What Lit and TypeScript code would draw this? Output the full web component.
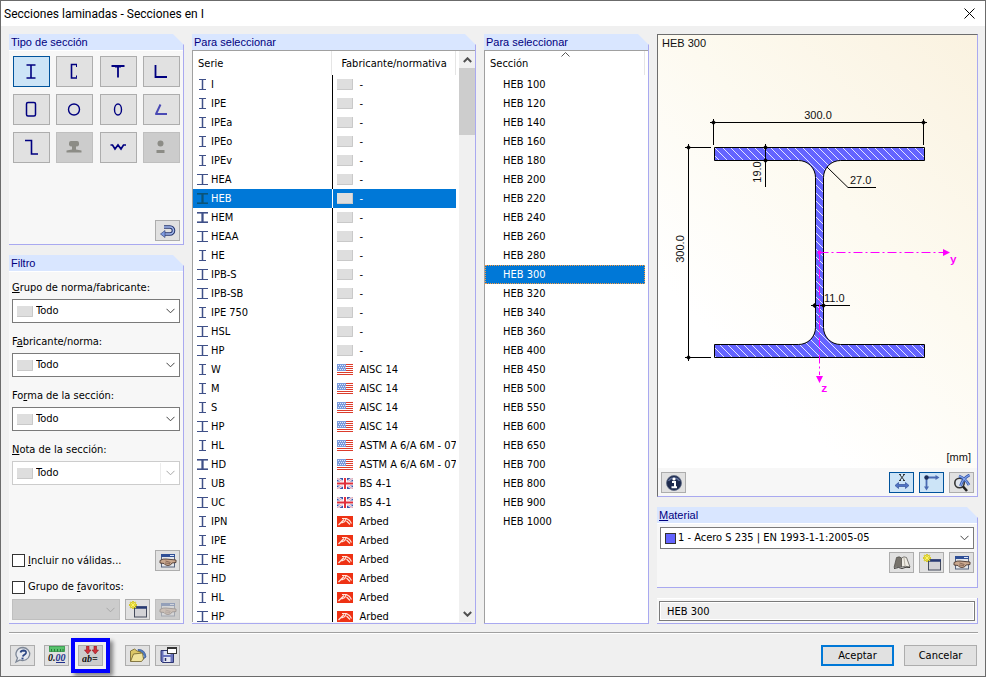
import { LitElement, html, css, svg, nothing, type TemplateResult } from "lit";
import { customElement, state } from "lit/decorators.js";
import { classMap } from "lit/directives/class-map.js";

type Flag = "none" | "us" | "uk" | "arbed";
type Beam = "slim" | "wide" | "heavy";
type Series = [name: string, beam: Beam, flag: Flag, maker: string];

const SERIES: Series[] = [
  ["I", "slim", "none", "-"],
  ["IPE", "slim", "none", "-"],
  ["IPEa", "slim", "none", "-"],
  ["IPEo", "slim", "none", "-"],
  ["IPEv", "slim", "none", "-"],
  ["HEA", "wide", "none", "-"],
  ["HEB", "heavy", "none", "-"],
  ["HEM", "heavy", "none", "-"],
  ["HEAA", "wide", "none", "-"],
  ["HE", "slim", "none", "-"],
  ["IPB-S", "wide", "none", "-"],
  ["IPB-SB", "wide", "none", "-"],
  ["IPE 750", "slim", "none", "-"],
  ["HSL", "wide", "none", "-"],
  ["HP", "wide", "none", "-"],
  ["W", "slim", "us", "AISC 14"],
  ["M", "slim", "us", "AISC 14"],
  ["S", "slim", "us", "AISC 14"],
  ["HP", "wide", "us", "AISC 14"],
  ["HL", "slim", "us", "ASTM A 6/A 6M - 07"],
  ["HD", "heavy", "us", "ASTM A 6/A 6M - 07"],
  ["UB", "slim", "uk", "BS 4-1"],
  ["UC", "wide", "uk", "BS 4-1"],
  ["IPN", "slim", "arbed", "Arbed"],
  ["IPE", "slim", "arbed", "Arbed"],
  ["HE", "wide", "arbed", "Arbed"],
  ["HD", "wide", "arbed", "Arbed"],
  ["HL", "slim", "arbed", "Arbed"],
  ["HP", "wide", "arbed", "Arbed"],
];

const SECTIONS = [
  100, 120, 140, 160, 180, 200, 220, 240, 260, 280, 300, 320, 340, 360, 400, 450,
  500, 550, 600, 650, 700, 800, 900, 1000,
].map((n) => `HEB ${n}`);

/* Section type glyphs on a 21 x 21 grid. */
const TYPES: { label: string; off?: boolean; art: TemplateResult }[] = [
  { label: "Perfil I", art: svg`<path d="M5.500 4h9M5.500 17h9M10 4v13" stroke-width="1.600"/>` },
  { label: "Perfil U", art: svg`<path d="M13 3.500H7.500v13.500H13" stroke-width="1.600"/><path d="M12.500 4v2M12.500 14.500v2"/>` },
  { label: "Perfil T", art: svg`<path d="M3.500 5h13M10 4.500v12" stroke-width="1.800"/><path d="M7 6h6"/>` },
  { label: "Angular", art: svg`<path d="M4.500 4v12h11.500" stroke-width="1.800"/>` },
  { label: "Tubo rectangular", art: svg`<rect x="5.500" y="3.500" width="9" height="13.500" rx="1.500" stroke-width="1.500"/>` },
  { label: "Tubo circular", art: svg`<circle cx="10" cy="10.500" r="5.500" stroke-width="1.400"/>` },
  { label: "Tubo elíptico", art: svg`<ellipse cx="10" cy="10.500" rx="3.500" ry="5.500" stroke-width="1.400"/>` },
  { label: "Angular abierto", art: svg`<path d="M9.500 5.500L5 15h11" stroke-width="2" stroke-linejoin="round" stroke="#4a4ab4"/>` },
  { label: "Perfil Z", art: svg`<path d="M4 3.500h6.500v13.500h6.500" stroke-width="1.600"/>` },
  {
    label: "Carril",
    off: true,
    art: svg`<path d="M5 8V6q0-2 2-2h6q2 0 2 2v2q-.500 1.500-3 1.500v3l5.500 1v2h-15v-2l5.500-1v-3q-2.500 0-3-1.500z" fill="#8c8c86" stroke="none"/>`,
  },
  { label: "Chapa corrugada", art: svg`<path d="M2.500 8h2l2.500 4 3-4 3 4 2.500-4h2.500" stroke-width="1.700"/>` },
  {
    label: "Macizo",
    off: true,
    art: svg`<circle cx="9.500" cy="6.500" r="3" fill="#8c8c86" stroke="none"/><path d="M5.500 14.500h8" stroke="#8c8c86" stroke-width="3"/>`,
  },
];

const swatch = svg`<rect width="16" height="11" fill="#dedede"/><path d="M0 10.500H15.500V0" fill="none" stroke="#c9c9c9"/>`;

const FLAGS: Record<Flag, TemplateResult> = {
  none: swatch,
  us: svg`<rect width="16" height="11" fill="#fff"/>
    <path d="M0 .5h16M0 2.500h16M0 4.500h16M0 6.500h16M0 8.500h16M0 10.500h16" stroke="#dc3c2c"/>
    <rect width="9" height="7" fill="#7b9bdc"/>
    <path d="M1 1.500h7M2 3.500h7M1 5.500h7" stroke="#dfe8fa" stroke-dasharray="1 1"/>`,
  uk: svg`<rect width="16" height="11" fill="#3c52a8"/>
    <path d="M0 0l16 11M16 0L0 11" stroke="#e8ecf8" stroke-width="2.600"/>
    <path d="M0 0l16 11M16 0L0 11" stroke="#e88c94" stroke-width=".8"/>
    <path d="M8 0v11M0 5.500h16" stroke="#fff" stroke-width="4"/>
    <path d="M8 0v11M0 5.500h16" stroke="#e0303c" stroke-width="2"/>`,
  arbed: svg`<rect width="16" height="11" fill="#ee3214"/>
    <path d="M1.500 9L7 3.500M5 2.500h4.500l3 2 2 3M9 3L7.500 6M9.500 5l3.500 3.500M4.500 7L8 5.500" fill="none" stroke="#ffe6dc" stroke-width="1.200"/>`,
};

const flag = (kind: Flag) => html`<svg class="flag" viewBox="0 0 16 11" aria-hidden="true">${FLAGS[kind]}</svg>`;

const beam = (kind: Beam) => {
  const x = kind === "slim" ? 2 : 0;
  const w = kind === "slim" ? 7 : 11;
  return html`<svg class="beam" viewBox="0 0 11 11" aria-hidden="true">
    <path d="M${x} .5h${w}M${x} 10.500h${w}" stroke-width="1"/>
    ${kind === "heavy" ? svg`<path d="M0 1.500h11M0 9.500h11" opacity=".6"/>` : nothing}
    <path d="M5.500 1v9" stroke-width=${kind === "heavy" ? 2 : 1}/>
    <path class="soft" d="M4.500 1v9M6.500 1v9"/>
  </svg>`;
};

const chevron = html`<svg class="chevron" viewBox="0 0 9 6" aria-hidden="true"><path d="M.5 .8L4.500 4.800L8.500 .8"/></svg>`;

/* Toolbar glyphs on an 18 x 18 grid. */
const undo = svg`<path d="M5 5h6a3 3 0 0 1 0 7H5" stroke="#27366f" stroke-width="3.600"/>
  <path d="M5 5h6a3 3 0 0 1 0 7H5" stroke="#a5bbee" stroke-width="1.500"/>
  <path d="M6 8.500v7L1.500 12z" fill="#7f9be0" stroke="#27366f" stroke-width=".6"/>`;
const windowEdit = (off = false) => svg`<g opacity=${off ? 0.35 : 1}>
  <rect x="2.500" y="3" width="13" height="12" fill="#e4e6ea" stroke="#56637d"/>
  <path d="M2 3.500h14" stroke="#2f4f96" stroke-width="3"/><path d="M11 3.500h4" stroke="#d8e2f6"/>
  <path d="M1 8.500q3-2 6-1.500l5 .5 5 .5v2.500l-4 .5q-1 2.500-4 2.500-3 0-4-2l-4-.5z" fill="#caa88e" stroke="#4d3a32" stroke-width=".9"/>
  <path d="M6 11l5 .5M6.500 9l5 1.500" stroke="#6b4e40" stroke-width=".7"/></g>`;
const windowNew = svg`<rect x="5.500" y="6" width="12" height="10" fill="#d3d3d6" stroke="#454b5c"/>
  <path d="M5 6.500h13" stroke="#273a73" stroke-width="2.500"/>
  <path d="M4 0v8M0 4h8M1.200 1.200l5.600 5.600M6.800 1.200L1.200 6.800" stroke="#c9ba10" stroke-width="1.800"/>
  <path d="M4 .5v7M.5 4h7M1.500 1.500l5 5M6.500 1.500l-5 5" stroke="#fff66a" stroke-width=".9"/>`;
const book = svg`<path d="M1 13.500L3.500 3.500Q6.500 2 8.500 4V13Q5 11.500 1 13.500z" fill="#77736c" stroke="#4b4945" stroke-width=".7"/>
  <path d="M8.500 4Q11 2 13.500 3.500L17 13q-5-1.500-8.500 0z" fill="#efece4" stroke="#4b4945" stroke-width=".7"/>
  <path d="M11 4l1 8" stroke="#b9b4a8"/>
  <path d="M1 14.500q5-2 8 0 4-2 8-1" stroke="#3a3835"/>`;
const help = svg`<path d="M9 1.500a7 6.500 0 1 1-3 12.500L2 16l1.500-4A7 6.500 0 0 1 9 1.500z" fill="#e6e9ef" stroke="#7d8797" stroke-width="1.300"/>
  <path d="M6.500 6.500Q7 4.500 9.500 4.500q3 .2 2.500 2.500-.3 1-2 2-1 .7-1.200 1.500" stroke="#2b4684" stroke-width="1.800"/>
  <path d="M7.500 12.500h2" stroke="#2b4684" stroke-width="1.800"/>`;
const folder = svg`<path d="M9 3.500q7-.5 8 7.500l-4 3z" fill="#4f7cc0" stroke="#314f8c" stroke-width=".7"/>
  <path d="M9 6q4-.5 6 5" stroke="#cfe0f6" stroke-width="1"/>
  <path d="M1.500 15V5l4-2L8 5l4 1v8z" fill="#dcc766" stroke="#6d5f28" stroke-width=".8"/>
  <path d="M1.500 15.500L4.500 8l9-1 1 6-2 2.500z" fill="#f1e49c" stroke="#6d5f28" stroke-width=".8"/>`;
const disk = svg`<path d="M2 4.500h12.500v12H3.500L2 15z" fill="#6a74bc" stroke="#2e3674"/>
  <rect x="4.500" y="11" width="7" height="5" fill="#e7e9f3"/><path d="M6.500 12v3" stroke="#252c66" stroke-width="1.500"/>
  <rect x="4.500" y="5" width="7" height="4" fill="#dbe1f4"/>
  <rect x="8.500" y="1.500" width="9" height="6" fill="#fff" stroke="#333"/><path d="M8 2h10" stroke="#333" stroke-width="2"/>`;
const info = svg`<circle cx="9" cy="9" r="7.500" fill="#1d2a4d" stroke="#5f6b84" stroke-width=".8"/>
  <path d="M3.500 7a6 5 0 0 1 11 0" stroke="#5b6b96" stroke-width="1.500"/>
  <circle cx="9" cy="5" r="1.600" fill="#fff"/><path d="M7 8h3v5M6.500 13.200h5.500" stroke="#fff" stroke-width="2"/>`;
const dims = svg`<path d="M7 1l4 5M11 1L7 6M6 .5h2M10 .5h2M6 6.500h2M10 6.500h2" stroke="#222" stroke-width=".9"/>
  <path d="M2 11.500l3.500-3v2h7v-2l3.500 3-3.500 3v-2h-7v2z" fill="#5074c4" stroke="#33529c" stroke-width=".7"/>`;
const axes = svg`<path d="M3 3.500h10M3.500 3v10" stroke="#4a6ab2" stroke-width="1.800"/>
  <path d="M12.500 1l4 2.500-4 2.500zM1 12.500l2.500 4 2.500-4z" fill="#4a6ab2"/><circle cx="3.500" cy="3.500" r="2.200" fill="#1d2d58"/>`;
const lens = svg`<circle cx="6.500" cy="9" r="4.700" stroke="#333" stroke-width="1.600" fill="#dfe4ec"/>
  <path d="M10 12.500l4 4.500" stroke="#222" stroke-width="2.600"/>
  <path d="M6 2q6 2 10 9M16.500 1Q10 4 7.500 12" stroke="#3558b0" stroke-width="2.800"/>
  <path d="M6 2q6 2 10 9M16.500 1Q10 4 7.500 12" stroke="#86a6ea" stroke-width="1.200"/>`;
const units = svg`<rect x="1.500" y=".5" width="15" height="5" fill="#58c26c" stroke="#2f9645" stroke-width=".8"/>
  <path d="M3.500 3v2.500M6.500 3v2.500M9.500 3v2.500M12.500 3v2.500M15 3v2.500" stroke="#1d6a2f" stroke-width=".8"/>
  <text class="num" x="0" y="15">0.<tspan fill="#20308c">00</tspan></text><path d="M8 16.500h9" stroke="#20308c"/>`;
const params = svg`<path d="M4.500 0h2.500v4H9L5.750 8 2.500 4h2zM12 0h2.500v4h2l-3.250 4L10 4h2z" fill="#d0303a" stroke="#8d1820" stroke-width=".6"/>
  <text class="num" x="0" y="16">ab=</text>`;

@customElement("app-root")
export class AppRoot extends LitElement {
  @state() private series = 6;
  @state() private section = 10;

  static styles = css`
    :host {
      --ui: "DejaVu Sans Condensed", "Noto Sans", sans-serif;
      --caption: "Liberation Sans", Arial, sans-serif;
      --rim: #a9a9f0;
      --edge: #adadad;
      display: flex;
      flex-direction: column;
      box-sizing: border-box;
      height: 100vh;
      border: 1px solid #6b6b6b;
      background: #f0f0f0;
      color: #000;
      font: 11px/14px var(--ui);
    }
    *, *::before, *::after { box-sizing: border-box; }
    svg { display: block; fill: none; }
    button, select, input { font: inherit; color: inherit; margin: 0; }
    .title {
      display: flex;
      align-items: center;
      justify-content: space-between;
      height: 25px;
      padding: 0 8px 0 3px;
      background: #fff;
      font: 12px/16px Roboto, "Open Sans", sans-serif;
    }
    .title h1 { margin: 0; font: inherit; }
    .close { border: 0; padding: 2px; background: none; }
    .close svg { width: 11px; height: 11px; stroke: #000; }
    main {
      flex: 1;
      min-height: 0;
      display: grid;
      grid-template-columns: 175fr 284fr 165fr 321fr;
      grid-template-rows: minmax(0, 1fr);
      gap: 8px;
      padding: 8px 7px 8px 8px;
    }
    .column { display: flex; flex-direction: column; gap: 10px; min-width: 0; min-height: 0; }
    .panel { display: flex; flex-direction: column; min-height: 0; }
    .grow { flex: 1; }
    .panel h2 {
      flex: none;
      height: 16px;
      margin: 0;
      padding: 0 2px;
      border-right: 1px solid var(--rim);
      background: #d9e6ff;
      color: #000080;
      font: 11px/16px var(--caption);
      clip-path: polygon(0 0, calc(100% - 11px) 0, 100% 11px, 100% 100%, 0 100%);
    }
    .body {
      flex: 1;
      min-height: 0;
      display: flex;
      flex-direction: column;
      border: solid var(--rim);
      border-width: 0 1px 1px 0;
      background: #f7f7f7;
      box-shadow: inset 0 1px #fff;
    }
    .tool {
      display: grid;
      place-items: center;
      flex: none;
      width: 25px;
      height: 21px;
      padding: 0;
      border: 1px solid var(--edge);
      background: #e1e1e1;
    }
    .tool svg { width: 18px; height: 18px; }
    .tool[disabled] { border-color: #bfbfbf; background: #ccc; }
    .tool.on, .type.on { border-color: #00539c; background: #cce4f7; }
    .num { font: italic bold 10px "Liberation Serif", serif; fill: #111; }

    .types {
      display: grid;
      grid-template-columns: repeat(4, 37px);
      justify-content: space-between;
      gap: 7px 0;
      padding: 6px 3px 57px 4px;
    }
    .type {
      display: grid;
      place-items: center;
      height: 31px;
      padding: 0;
      border: 1px solid var(--edge);
      background: #e1e1e1;
    }
    .type svg { width: 21px; height: 21px; stroke: #000080; }
    .type[disabled] { border-color: #bfbfbf; background: #ccc; }
    .undo { align-self: flex-end; margin: 0 3px 3px; }

    .filters { display: grid; gap: 12px; padding: 10px 3px 0; }
    .field { display: grid; gap: 4px; }
    .combo {
      display: flex;
      align-items: center;
      height: 24px;
      padding: 0 4px;
      border: 1px solid #7a7a7a;
      background: #fff;
    }
    .combo .flag { margin-right: 3px; }
    .combo select {
      flex: 1;
      min-width: 0;
      padding: 0;
      border: 0;
      background: none;
      appearance: none;
      opacity: 1;
    }
    .combo.off { border-color: #ccc; }
    .field .off select { height: 20px; border-right: 1px solid #ececec; margin-right: 5px; }
    .chevron { width: 9px; height: 6px; stroke: #444; flex: none; }
    .off .chevron { stroke: #a8a8a8; }
    .flag { width: 16px; height: 11px; flex: none; }
    .options { display: grid; gap: 9px; margin-top: auto; padding: 0 3px 3px; }
    .favorites { display: grid; gap: 5px; }
    .row { display: flex; align-items: center; justify-content: space-between; gap: 5px; }
    .check { display: flex; align-items: center; gap: 3px; }
    .check input {
      appearance: none;
      width: 13px;
      height: 13px;
      border: 1px solid #333;
      background: #fff;
    }
    .combo.blank { flex: 1; height: 21px; border-color: #bfbfbf; background: #ccc; }

    .list {
      flex: 1;
      min-height: 0;
      display: flex;
      overflow: hidden;
      border: solid #a0a0a0;
      border-width: 1px 0 0 1px;
      background: #fff;
      margin-bottom: 1px;
    }
    .list.lined { margin-bottom: 0; }
    .view { flex: 1; min-width: 0; overflow: hidden; position: relative; }
    table { border-collapse: separate; border-spacing: 0; table-layout: fixed; width: 100%; }
    th, td { padding: 0 0 0 4px; font-weight: normal; text-align: left; white-space: nowrap; }
    th { height: 24px; padding: 1px 0 0 5px; border-right: 1px solid #e5e5e5; }
    th:first-child { width: 53%; }
    .makers th + th { padding-left: 9px; }
    td { height: 19px; }
    td + td { border-left: 1px solid #000; }
    .cell { display: flex; align-items: center; gap: 3px; height: 19px; }
    .cell span { padding-top: 1px; line-height: 16px; }
    .cell.maker { gap: 6px; }
    .beam { width: 11px; height: 11px; stroke: #3f5088; flex: none; }
    .beam .soft { opacity: .25; }
    tr.picked { background: #0078d7; color: #fff; }
    tr.picked td + td { border-color: #fff; }
    .picked .beam { stroke: #0a5478; }
    .sections th:first-child { width: 100%; }
    .sections td { padding-left: 18px; }
    .sections .picked td { outline: 1px dotted #ff9a3c; outline-offset: -1px; }
    .sections { padding-right: 3px; }
    .makers { margin-right: 3px; }
    .sort { position: absolute; top: 1px; left: 50%; width: 9px; height: 5px; margin-left: -6px; stroke: #555; }
    .scroll {
      display: flex;
      flex-direction: column;
      width: 16px;
      background: #f0f0f0;
    }
    .scroll button { display: grid; place-items: center; height: 17px; padding: 0; border: 0; background: none; }
    .scroll svg { width: 9px; height: 6px; stroke: #505050; stroke-width: 2; }
    .thumb { height: 67px; background: #cdcdcd; }
    .track { flex: 1; }

    .preview { flex: none; border: 1px solid; border-color: #6d6d6d var(--rim) var(--rim) #6d6d6d; background: #f7f7f7; }
    .canvas { display: block; width: 100%; height: auto; background: linear-gradient(45deg, #fff 25%, #fdfaf0 60%, #faf2e0); }
    .canvas text { font: 11px var(--caption); fill: #111; }
    .canvas .axis { font: bold 11px "Liberation Mono", monospace; fill: #f0f; }
    .bar { display: flex; gap: 5px; padding: 4px 3px 3px; }
    .bar .first { margin-right: auto; }
    .material { padding: 4px 3px 14px; gap: 3px; }
    .material .bar { justify-content: flex-end; padding: 0; }
    .chip { width: 11px; height: 11px; margin-right: 2px; border: 1px solid #333; background: #6464ff; }
    .combo.pick { height: 22px; }
    .result { flex: none; }
    .result .body { padding: 3px 2px 2px; }
    .result input {
      width: 100%;
      height: 20px;
      padding: 0 7px;
      border: 1px solid #7a7a7a;
      outline: 1px solid #fff;
      outline-offset: -2px;
      background: #f0f0f0;
    }

    footer {
      display: flex;
      align-items: center;
      gap: 22px;
      height: 44px;
      margin: 0 7px 0 8px;
      padding: 1px 1px 0;
      border-top: 1px solid #a0a0a0;
      box-shadow: inset 0 1px #fff;
    }
    .group { display: flex; gap: 9px; }
    .group.tight { gap: 5px; }
    .lit { position: relative; }
    .lit::after {
      content: "";
      position: absolute;
      inset: -7px;
      border: 4px solid #00f;
      box-shadow: 3px 3px 4px rgba(0, 0, 0, .45);
      pointer-events: none;
    }
    .lit .tool { background: #ccc; }
    .group.commands { margin-left: auto; gap: 10px; }
    .cmd { width: 73px; height: 21px; padding: 0; border: 1px solid var(--edge); background: #e1e1e1; line-height: 19px; }
    .cmd.main { border: 2px solid #0078d7; line-height: 17px; }
  `;

  private tool(label: string, art: TemplateResult, extra = "", off = false) {
    return html`<button class="tool ${extra}" aria-label=${label} ?disabled=${off}>
      <svg viewBox="0 0 18 18">${art}</svg>
    </button>`;
  }

  private filter(id: string, label: TemplateResult, off = false) {
    return html`<div class="field">
      <label for=${id}>${label}</label>
      <div class=${classMap({ combo: true, off })}>
        ${flag("none")}<select id=${id} ?disabled=${off}><option>Todo</option></select>${chevron}
      </div>
    </div>`;
  }

  private drawing() {
    const dots: [number, number][] = [
      [55.5, 87.5], [265.5, 87.5], [30.5, 112.5], [30.5, 322.5],
      [107.5, 112.5], [107.5, 125.5], [156.5, 270.5], [165.5, 270.5],
    ];
    return html`<svg class="canvas" viewBox="0 0 319 433" role="img" aria-label="HEB 300">
      <defs>
        <pattern id="hatch" width="8" height="8" patternUnits="userSpaceOnUse">
          <rect width="8" height="8" fill="#6464ff"/>
          <path d="M-1 -1L9 9M-1 7L1 9M7 -1L9 1" stroke="#e4e4ff" stroke-width="1"/>
        </pattern>
      </defs>
      <path d="M56.500 112.500H266.500V125.500H182.500A17 17 0 0 0 165.500 142.500V292.500A17 17 0 0 0 182.500 309.500H266.500V322.500H56.500V309.500H140.500A17 17 0 0 0 157.500 292.500V142.500A17 17 0 0 0 140.500 125.500H56.500Z"
        fill="url(#hatch)" stroke="#000"/>
      <path d="M52 87.500H269M55.500 84V110M265.500 84V110M30.500 109V326M27 112.500H53M27 322.500H53M107.500 109V152M153 270.500H192M190 152.500H218M169 132L190 152.500" stroke="#000"/>
      ${dots.map(([x, y]) => svg`<path d="M${x - 2.5} ${y}l2.500 -2.500l2.500 2.500l-2.500 2.500z" fill="#000"/>`)}
      <path d="M161.500 217.500H285M161.500 217.500V340" stroke="#f0f" stroke-dasharray="9 3 2 3"/>
      <path d="M285 214l7 3.500l-7 3.500zM158 341h7l-3.500 7z" fill="#f0f"/><circle cx="161.500" cy="217.500" r="2" fill="#f0f"/>
      <text x="4" y="12">HEB 300</text>
      <text x="160" y="84" text-anchor="middle">300.0</text>
      <text transform="translate(26 214) rotate(-90)" text-anchor="middle">300.0</text>
      <text transform="translate(103 137) rotate(-90)" text-anchor="middle">19.0</text>
      <text x="192" y="149">27.0</text>
      <text x="166" y="267">11.0</text>
      <text class="axis" x="292" y="228">y</text>
      <text class="axis" x="163" y="357">z</text>
      <text x="313" y="426" text-anchor="end">[mm]</text>
    </svg>`;
  }

  render() {
    return html`
      <header class="title">
        <h1>Secciones laminadas - Secciones en I</h1>
        <button class="close" aria-label="Cerrar"><svg viewBox="0 0 11 11"><path d="M.5 .5l10 10M10.500 .5l-10 10"/></svg></button>
      </header>
      <main>
        <div class="column">
          <section class="panel">
            <h2>Tipo de sección</h2>
            <div class="body">
              <div class="types">
                ${TYPES.map(
                  (t, i) => html`<button class=${classMap({ type: true, on: i === 0 })} aria-label=${t.label} ?disabled=${!!t.off}>
                    <svg viewBox="0 0 21 21">${t.art}</svg>
                  </button>`,
                )}
              </div>
              ${this.tool("Restablecer", undo, "undo")}
            </div>
          </section>
          <section class="panel grow">
            <h2>Filtro</h2>
            <div class="body">
              <div class="filters">
                ${this.filter("norm-group", html`<u>G</u>rupo de norma/fabricante:`)}
                ${this.filter("maker", html`F<u>a</u>bricante/norma:`)}
                ${this.filter("shape", html`Fo<u>r</u>ma de la sección:`)}
                ${this.filter("note", html`<u>N</u>ota de la sección:`, true)}
              </div>
              <div class="options">
                <div class="row">
                  <label class="check"><input type="checkbox" /><span><u>I</u>ncluir no válidas...</span></label>
                  ${this.tool("Editar", windowEdit())}
                </div>
                <div class="favorites">
                  <label class="check"><input type="checkbox" /><span>Grupo de <u>f</u>avoritos:</span></label>
                  <div class="row">
                    <div class="combo off blank"><select aria-label="Grupo de favoritos" disabled></select>${chevron}</div>
                    ${this.tool("Nuevo grupo", windowNew)} ${this.tool("Editar grupo", windowEdit(true), "", true)}
                  </div>
                </div>
              </div>
            </div>
          </section>
        </div>

        <section class="panel">
          <h2>Para seleccionar</h2>
          <div class="body">
            <div class="list">
              <div class="view makers">
                <table>
                  <thead><tr><th>Serie</th><th>Fabricante/normativa</th></tr></thead>
                  <tbody>
                    ${SERIES.map(
                      ([name, kind, mark, maker], i) => html`<tr
                        class=${classMap({ picked: i === this.series })}
                        @click=${() => (this.series = i)}
                      >
                        <td><div class="cell">${beam(kind)}<span>${name}</span></div></td>
                        <td><div class="cell maker">${flag(mark)}<span>${maker}</span></div></td>
                      </tr>`,
                    )}
                  </tbody>
                </table>
              </div>
              <div class="scroll">
                <button aria-label="Subir"><svg viewBox="0 0 9 6"><path d="M.8 5L4.500 1.300L8.200 5"/></svg></button>
                <div class="thumb"></div>
                <div class="track"></div>
                <button aria-label="Bajar"><svg viewBox="0 0 9 6"><path d="M.8 1L4.500 4.700L8.200 1"/></svg></button>
              </div>
            </div>
          </div>
        </section>

        <section class="panel">
          <h2>Para seleccionar</h2>
          <div class="body">
            <div class="list lined">
              <div class="view sections">
                <svg class="sort" viewBox="0 0 9 5"><path d="M.5 4.500L4.500 .5L8.500 4.500"/></svg>
                <table>
                  <thead><tr><th>Sección</th></tr></thead>
                  <tbody>
                    ${SECTIONS.map(
                      (name, i) => html`<tr class=${classMap({ picked: i === this.section })} @click=${() => (this.section = i)}>
                        <td><div class="cell"><span>${name}</span></div></td>
                      </tr>`,
                    )}
                  </tbody>
                </table>
              </div>
            </div>
          </div>
        </section>

        <div class="column">
          <section class="preview">
            ${this.drawing()}
            <div class="bar">
              ${this.tool("Información", info, "first")} ${this.tool("Acotaciones", dims, "on")}
              ${this.tool("Ejes", axes, "on")} ${this.tool("Ampliar todo", lens)}
            </div>
          </section>
          <section class="panel">
            <h2><label for="material"><u>M</u>aterial</label></h2>
            <div class="body material">
              <div class="combo pick">
                <span class="chip"></span>
                <select id="material"><option>1 - Acero S 235 | EN 1993-1-1:2005-05</option></select>${chevron}
              </div>
              <div class="bar">
                ${this.tool("Biblioteca", book)} ${this.tool("Nuevo material", windowNew)} ${this.tool("Editar material", windowEdit())}
              </div>
            </div>
          </section>
          <section class="panel result">
            <div class="body"><input aria-label="Sección seleccionada" readonly .value=${SECTIONS[this.section]} /></div>
          </section>
        </div>
      </main>
      <footer>
        <div class="group">
          ${this.tool("Ayuda", help)} ${this.tool("Unidades", units)}
          <span class="lit">${this.tool("Parametrizar", params)}</span>
        </div>
        <div class="group tight">${this.tool("Abrir", folder)} ${this.tool("Guardar", disk)}</div>
        <div class="group commands">
          <button class="cmd main">Aceptar</button>
          <button class="cmd">Cancelar</button>
        </div>
      </footer>
    `;
  }
}
